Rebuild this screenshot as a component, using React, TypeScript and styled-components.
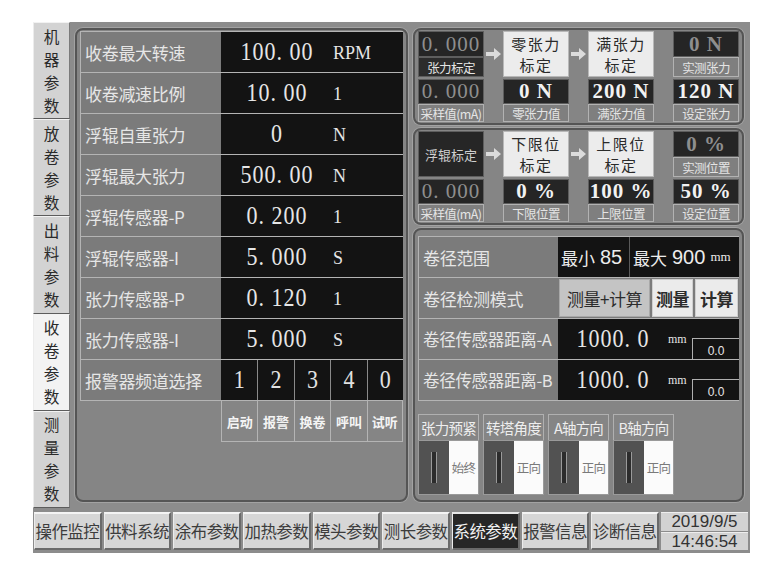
import React from 'react';
import styled, { createGlobalStyle } from 'styled-components';

const CJK = `"Noto Sans CJK SC", "Noto Sans", sans-serif`;
const SERIF = `"Liberation Serif", "Noto Sans CJK SC", serif`;

const GlobalStyle = createGlobalStyle`
  html, body {
    margin: 0;
    padding: 0;
    background: #fff;
  }
  body {
    font-family: ${CJK};
  }
  * {
    box-sizing: border-box;
  }
`;

const Page = styled.div`
  width: 774px;
  height: 579px;
  padding: 22px 24px 26px 33px;
`;

const Screen = styled.div`
  width: 717px;
  height: 531px;
  background: #8c8c8c;
  display: flex;
  flex-direction: column;
`;

const Main = styled.div`
  display: flex;
  height: 486px;
`;

/* ---------- left vertical tabs ---------- */

const TabColumn = styled.nav`
  width: 37px;
  display: flex;
  flex-direction: column;
`;

const Tab = styled.div<{ $active?: boolean }>`
  flex: 1;
  display: flex;
  flex-direction: column;
  align-items: center;
  justify-content: center;
  background: ${(p) => (p.$active ? '#f3f3f3' : '#d3d3d3')};
  border-top: 1px solid #f2f2f2;
  border-left: 1px solid #ececec;
  border-right: 1px solid #7a7a7a;
  border-bottom: 1px solid #5c5c5c;
  color: #2a2a2a;
  font-size: 15.6px;
  line-height: 23px;
  & span {
    display: block;
    height: 23px;
  }
`;

const Workspace = styled.div`
  flex: 1;
  display: flex;
  gap: 5px;
  padding: 6px 6px 6px 5px;
`;

const Panel = styled.section<{ $h?: number }>`
  border: 2px solid #555;
  border-radius: 8px;
  background: #858585;
  box-shadow: 0 0 0 1px #a2a2a2;
  ${(p) => (p.$h ? `height: ${p.$h}px;` : '')}
`;

/* ---------- left parameter table ---------- */

const LeftPanel = styled(Panel)`
  width: 333px;
  padding: 1px 3px;
`;

const Table = styled.div`
  width: 323px;
  border-top: 1px solid #b4b4b4;
`;

const Row = styled.div<{ $label?: number }>`
  display: grid;
  grid-template-columns: ${(p) => p.$label ?? 141}px 1fr;
  height: 41px;
  border-bottom: 1px solid #b4b4b4;
`;

const Label = styled.div<{ $size?: number }>`
  display: flex;
  align-items: center;
  padding-left: 4px;
  background: #7b7b7b;
  border-left: 1px solid #b4b4b4;
  color: #e6e6e6;
  font-size: ${(p) => p.$size ?? 17}px;
  white-space: nowrap;
  letter-spacing: -0.3px;
`;

const Value = styled.div`
  display: grid;
  grid-template-columns: 112px 1fr;
  align-items: center;
  background: #131313;
  color: #e6e6e6;
  font-family: ${SERIF};
`;

const Number = styled.span`
  display: inline-block;
  text-align: center;
  font-size: 22px;
  letter-spacing: 1px;
  transform: scaleY(1.15);
`;

const Unit = styled.span`
  display: inline-block;
  font-size: 18px;
  transform: scaleY(1.1);
`;

const Channels = styled.div`
  display: grid;
  grid-template-columns: repeat(5, 1fr);
  background: #131313;
`;

const Channel = styled.div`
  display: flex;
  align-items: center;
  justify-content: center;
  border-left: 1px solid #8a8a8a;
  color: #e2e2e2;
  font-family: ${SERIF};
  font-size: 22px;
  & span {
    display: inline-block;
    transform: scaleY(1.15);
  }
  &:first-child {
    border-left: none;
  }
`;

const ChannelNames = styled.div`
  display: grid;
  grid-template-columns: 141px repeat(5, 1fr);
  height: 41px;
`;

const ChannelName = styled.div`
  display: flex;
  align-items: center;
  justify-content: center;
  border-left: 1px solid #b4b4b4;
  border-bottom: 1px solid #b4b4b4;
  color: #f4f4f4;
  font-size: 13px;
  font-weight: 700;
  &:first-child {
    border: none;
  }
  &:last-child {
    border-right: 1px solid #b4b4b4;
  }
`;

/* ---------- right column ---------- */

const RightColumn = styled.div`
  width: 331px;
  display: flex;
  flex-direction: column;
  gap: 3px;
`;

const CalPanel = styled(Panel)`
  padding: 1px 3px;
  display: flex;
`;

const Col = styled.div`
  width: 66px;
  display: flex;
  flex-direction: column;
`;

const TopBlock = styled.div`
  height: 46px;
  display: flex;
  flex-direction: column;
  margin-bottom: 2px;
`;

const CalButton = styled.div`
  height: 46px;
  margin-bottom: 2px;
  display: flex;
  flex-direction: column;
  align-items: center;
  justify-content: center;
  background: #ececec;
  border: 1px solid #b8b8b8;
  color: #2a2a2a;
  font-size: 15px;
  line-height: 21px;
  letter-spacing: 1.5px;
  & span {
    display: block;
    height: 21px;
  }
`;

const DarkBox = styled.div<{ $h: number; $dim?: boolean; $bold?: boolean }>`
  height: ${(p) => p.$h}px;
  display: flex;
  align-items: center;
  justify-content: center;
  background: #252525;
  border: 1px solid #5e5e5e;
  color: ${(p) => (p.$dim ? '#8e8e8e' : '#f2f2f2')};
  font-family: ${SERIF};
  font-size: 21px;
  font-weight: ${(p) => (p.$bold ? 700 : 400)};
  letter-spacing: 1px;
  white-space: pre;
`;

const DarkTitle = styled.div`
  height: 46px;
  margin-bottom: 2px;
  display: flex;
  align-items: center;
  justify-content: center;
  background: #262626;
  border: 1px solid #5e5e5e;
  color: #cfcfcf;
  font-size: 13px;
`;

const SmallLabel = styled.div<{ $h: number; $dark?: boolean }>`
  height: ${(p) => p.$h}px;
  display: flex;
  align-items: center;
  justify-content: center;
  background: ${(p) => (p.$dark ? '#2c2c2c' : '#7f7f7f')};
  border: 1px solid ${(p) => (p.$dark ? '#5e5e5e' : '#b2b2b2')};
  color: #e4e4e4;
  font-size: 12.5px;
  letter-spacing: -0.6px;
  white-space: nowrap;
`;

const Link = styled.div`
  width: 19px;
  height: 46px;
  display: flex;
  align-items: center;
  justify-content: center;
`;

const Arrow = () => (
  <svg width="17" height="14" viewBox="0 0 17 14">
    <path d="M1 5h8V1l7 6-7 6V9H1z" fill="#dcdcdc" />
  </svg>
);

type ColumnProps = {
  top: React.ReactNode;
  value: string;
  caption: string;
  dim?: boolean;
};

const CalColumn: React.FC<ColumnProps> = ({ top, value, caption, dim }) => (
  <Col>
    {top}
    <DarkBox $h={25} $dim={dim} $bold={!dim}>
      {value}
    </DarkBox>
    <SmallLabel $h={18}>{caption}</SmallLabel>
  </Col>
);

const CalTrigger: React.FC<{ lines: string[] }> = ({ lines }) => (
  <CalButton>
    {lines.map((l) => (
      <span key={l}>{l}</span>
    ))}
  </CalButton>
);

/* ---------- diameter panel ---------- */

const DiaPanel = styled(Panel)`
  flex: 1;
  padding: 6px 3px 0;
`;

const DiaTable = styled.div`
  width: 321px;
  border-top: 1px solid #b4b4b4;
`;

const RangeValue = styled.div`
  display: grid;
  grid-template-columns: 72px 1fr;
  background: #131313;
  color: #ececec;
`;

const RangePart = styled.div`
  display: flex;
  align-items: center;
  gap: 5px;
  padding-left: 3px;
  border-right: 1px solid #5a5a5a;
  font-size: 17px;
  &:last-child {
    border-right: none;
  }
  & b {
    font-family: "Liberation Sans", sans-serif;
    font-weight: 400;
    font-size: 20px;
  }
  & i {
    font-style: normal;
    font-family: ${SERIF};
    font-size: 13px;
  }
`;

const ModeButtons = styled.div`
  display: grid;
  grid-template-columns: 91px 41px 1fr;
  gap: 2px;
  padding: 1px;
  background: #7b7b7b;
`;

const ModeButton = styled.div<{ $pressed?: boolean }>`
  display: flex;
  align-items: center;
  justify-content: center;
  background: ${(p) => (p.$pressed ? '#c4c4c4' : '#ebebeb')};
  border: 1px solid ${(p) => (p.$pressed ? '#a8a8a8' : '#cfcfcf')};
  color: #2c2c2c;
  font-size: 17px;
  font-weight: ${(p) => (p.$pressed ? 400 : 700)};
  letter-spacing: -0.5px;
  white-space: nowrap;
`;

const Distance = styled.div`
  display: grid;
  grid-template-columns: 110px 24px 1fr;
  background: #131313;
  color: #e6e6e6;
`;

const DistanceNumber = styled.span`
  align-self: center;
  text-align: center;
  font-family: ${SERIF};
  font-size: 22px;
  letter-spacing: 1px;
  transform: scaleY(1.15);
`;

const DistanceUnit = styled.span`
  padding-top: 13px;
  font-family: ${SERIF};
  font-size: 12px;
`;

const Offset = styled.span`
  align-self: end;
  height: 21px;
  display: flex;
  align-items: flex-end;
  justify-content: center;
  border: 1px solid #b0b0b0;
  border-right: none;
  border-bottom: none;
  color: #e6e6e6;
  font-family: "Liberation Sans", sans-serif;
  font-size: 12px;
  line-height: 16px;
`;

const ToggleRow = styled.div`
  display: flex;
  gap: 4px;
  margin-top: 13px;
`;

const ToggleGroup = styled.div`
  width: 61px;
  display: flex;
  flex-direction: column;
`;

const ToggleLabel = styled.div`
  height: 26px;
  display: flex;
  align-items: center;
  justify-content: center;
  border: 1px solid #b0b0b0;
  border-bottom: none;
  color: #eeeeee;
  font-size: 14.5px;
  letter-spacing: -0.8px;
  white-space: nowrap;
`;

const Switch = styled.div`
  height: 55px;
  display: flex;
  border: 1px solid #9a9a9a;
`;

const SwitchKnob = styled.div`
  width: 30px;
  display: flex;
  align-items: center;
  justify-content: center;
  background: #525252;
  &::after {
    content: '';
    width: 4px;
    height: 31px;
    background: #2c2c2c;
    border-left: 1px solid #9a9a9a;
    border-right: 1px solid #9a9a9a;
  }
`;

const SwitchText = styled.div`
  flex: 1;
  display: flex;
  align-items: center;
  justify-content: center;
  background: #fbfbfb;
  color: #7a7a7a;
  font-size: 12.5px;
  letter-spacing: -0.8px;
`;

/* ---------- bottom navigation ---------- */

const NavBar = styled.div`
  margin-top: 4px;
  height: 38px;
  display: grid;
  grid-template-columns: repeat(9, 1fr) 87px;
  gap: 2px;
  padding: 0 2px 0 1px;
`;

const NavButton = styled.div<{ $active?: boolean }>`
  display: flex;
  align-items: center;
  justify-content: center;
  background: ${(p) => (p.$active ? '#272727' : '#d6d6d6')};
  color: ${(p) => (p.$active ? '#f2f2f2' : '#3c3c3c')};
  border-top: 2px solid ${(p) => (p.$active ? '#e8e8e8' : '#f4f4f4')};
  border-left: 1px solid #ececec;
  border-right: 2px solid #6a6a6a;
  border-bottom: 2px solid #6a6a6a;
  font-size: 16.5px;
  letter-spacing: -0.6px;
  white-space: nowrap;
`;

const Clock = styled.div`
  display: grid;
  grid-template-rows: 1fr 1fr;
  gap: 1px;
`;

const ClockCell = styled.div`
  display: flex;
  align-items: center;
  justify-content: center;
  background: #d2d2d2;
  border-top: 1px solid #eeeeee;
  color: #333;
  font-family: "Liberation Sans", sans-serif;
  font-size: 17px;
  line-height: 1;
`;

/* ---------- data ---------- */

const tabs = [
  { name: '机器参数' },
  { name: '放卷参数' },
  { name: '出料参数' },
  { name: '收卷参数', active: true },
  { name: '测量参数' },
];

const params = [
  { label: '收卷最大转速', value: '100.00', unit: 'RPM' },
  { label: '收卷减速比例', value: '10.00', unit: '1' },
  { label: '浮辊自重张力', value: '0', unit: 'N' },
  { label: '浮辊最大张力', value: '500.00', unit: 'N' },
  { label: '浮辊传感器-P', value: '0.200', unit: '1' },
  { label: '浮辊传感器-I', value: '5.000', unit: 'S' },
  { label: '张力传感器-P', value: '0.120', unit: '1' },
  { label: '张力传感器-I', value: '5.000', unit: 'S' },
];

const channels = ['1', '2', '3', '4', '0'];
const channelNames = ['启动', '报警', '换卷', '呼叫', '试听'];

const toggles = [
  { label: '张力预紧', state: '始终' },
  { label: '转塔角度', state: '正向' },
  { label: 'A轴方向', state: '正向' },
  { label: 'B轴方向', state: '正向' },
];

const navItems = [
  '操作监控',
  '供料系统',
  '涂布参数',
  '加热参数',
  '模头参数',
  '测长参数',
  '系统参数',
  '报警信息',
  '诊断信息',
];

const spaced = (v: string) => v.replace('.', '. ');

export default function App() {
  return (
    <Page>
      <GlobalStyle />
      <Screen>
        <Main>
          <TabColumn>
            {tabs.map((t) => (
              <Tab key={t.name} $active={t.active}>
                {t.name.split('').map((c, i) => (
                  <span key={i}>{c}</span>
                ))}
              </Tab>
            ))}
          </TabColumn>

          <Workspace>
            <LeftPanel>
              <Table>
                {params.map((p) => (
                  <Row key={p.label}>
                    <Label>{p.label}</Label>
                    <Value>
                      <Number>{spaced(p.value)}</Number>
                      <Unit>{p.unit}</Unit>
                    </Value>
                  </Row>
                ))}
                <Row>
                  <Label>报警器频道选择</Label>
                  <Channels>
                    {channels.map((c, i) => (
                      <Channel key={i}>
                        <span>{c}</span>
                      </Channel>
                    ))}
                  </Channels>
                </Row>
                <ChannelNames>
                  <ChannelName />
                  {channelNames.map((n) => (
                    <ChannelName key={n}>{n}</ChannelName>
                  ))}
                </ChannelNames>
              </Table>
            </LeftPanel>

            <RightColumn>
              <CalPanel $h={97}>
                <CalColumn
                  top={
                    <TopBlock>
                      <DarkBox $h={26} $dim>
                        0. 000
                      </DarkBox>
                      <SmallLabel $h={20} $dark>
                        张力标定
                      </SmallLabel>
                    </TopBlock>
                  }
                  value="0. 000"
                  caption="采样值(mA)"
                  dim
                />
                <Link>
                  <Arrow />
                </Link>
                <CalColumn
                  top={<CalTrigger lines={['零张力', '标定']} />}
                  value="0 N"
                  caption="零张力值"
                />
                <Link>
                  <Arrow />
                </Link>
                <CalColumn
                  top={<CalTrigger lines={['满张力', '标定']} />}
                  value="200 N"
                  caption="满张力值"
                />
                <Link />
                <CalColumn
                  top={
                    <TopBlock>
                      <DarkBox $h={26} $dim $bold>
                        0 N
                      </DarkBox>
                      <SmallLabel $h={20}>实测张力</SmallLabel>
                    </TopBlock>
                  }
                  value="120 N"
                  caption="设定张力"
                />
              </CalPanel>

              <CalPanel $h={97}>
                <CalColumn
                  top={<DarkTitle>浮辊标定</DarkTitle>}
                  value="0. 000"
                  caption="采样值(mA)"
                  dim
                />
                <Link>
                  <Arrow />
                </Link>
                <CalColumn
                  top={<CalTrigger lines={['下限位', '标定']} />}
                  value="0 %"
                  caption="下限位置"
                />
                <Link>
                  <Arrow />
                </Link>
                <CalColumn
                  top={<CalTrigger lines={['上限位', '标定']} />}
                  value="100 %"
                  caption="上限位置"
                />
                <Link />
                <CalColumn
                  top={
                    <TopBlock>
                      <DarkBox $h={26} $dim $bold>
                        0 %
                      </DarkBox>
                      <SmallLabel $h={20}>实测位置</SmallLabel>
                    </TopBlock>
                  }
                  value="50 %"
                  caption="设定位置"
                />
              </CalPanel>

              <DiaPanel>
                <DiaTable>
                  <Row $label={140}>
                    <Label>卷径范围</Label>
                    <RangeValue>
                      <RangePart>
                        最小<b>85</b>
                      </RangePart>
                      <RangePart>
                        最大<b>900</b>
                        <i>mm</i>
                      </RangePart>
                    </RangeValue>
                  </Row>
                  <Row $label={140}>
                    <Label>卷径检测模式</Label>
                    <ModeButtons>
                      <ModeButton $pressed>测量+计算</ModeButton>
                      <ModeButton>测量</ModeButton>
                      <ModeButton>计算</ModeButton>
                    </ModeButtons>
                  </Row>
                  {['A', 'B'].map((s) => (
                    <Row $label={140} key={s}>
                      <Label $size={16.5}>卷径传感器距离-{s}</Label>
                      <Distance>
                        <DistanceNumber>1000. 0</DistanceNumber>
                        <DistanceUnit>mm</DistanceUnit>
                        <Offset>0.0</Offset>
                      </Distance>
                    </Row>
                  ))}
                </DiaTable>

                <ToggleRow>
                  {toggles.map((t) => (
                    <ToggleGroup key={t.label}>
                      <ToggleLabel>{t.label}</ToggleLabel>
                      <Switch>
                        <SwitchKnob />
                        <SwitchText>{t.state}</SwitchText>
                      </Switch>
                    </ToggleGroup>
                  ))}
                </ToggleRow>
              </DiaPanel>
            </RightColumn>
          </Workspace>
        </Main>

        <NavBar>
          {navItems.map((n) => (
            <NavButton key={n} $active={n === '系统参数'}>
              {n}
            </NavButton>
          ))}
          <Clock>
            <ClockCell>2019/9/5</ClockCell>
            <ClockCell>14:46:54</ClockCell>
          </Clock>
        </NavBar>
      </Screen>
    </Page>
  );
}
